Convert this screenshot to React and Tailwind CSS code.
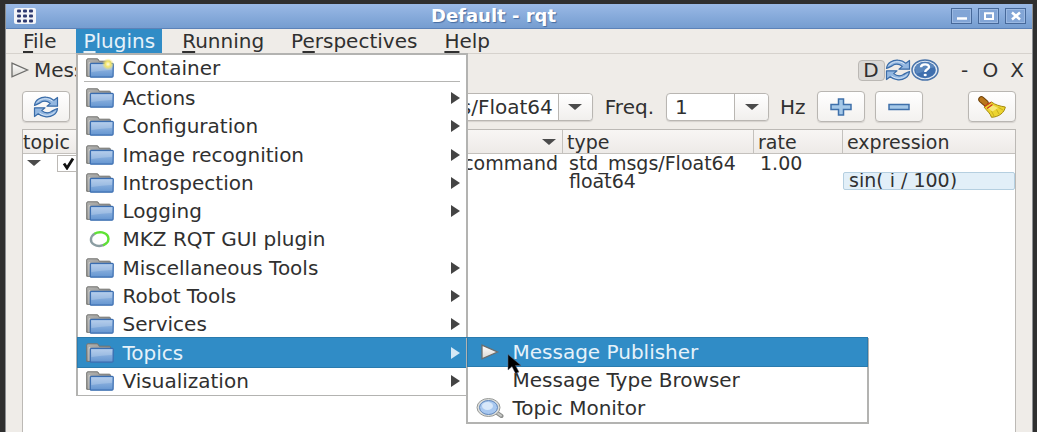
import React from "react";

function FolderIcon({ star }) {
  return (
    <svg viewBox="0 0 28 20" className="h-5 w-7 shrink-0" aria-hidden="true">
      <defs>
        <linearGradient id="folderFront" x1="0" y1="0" x2="0" y2="1">
          <stop offset="0" stopColor="#a5c3e8" />
          <stop offset="1" stopColor="#6495d0" />
        </linearGradient>
        <linearGradient id="folderBack" x1="0" y1="0" x2="1" y2="1">
          <stop offset="0" stopColor="#b5b5b3" />
          <stop offset="1" stopColor="#7c7c7a" />
        </linearGradient>
        <radialGradient id="folderStar">
          <stop offset="0" stopColor="#fffde0" />
          <stop offset="0.45" stopColor="#f3e56a" />
          <stop offset="1" stopColor="#f3e56a" stopOpacity="0" />
        </radialGradient>
      </defs>
      <path d="M.7 18.3V2Q.7.8 2 .8h9q1.2 0 1.6 1.2l.5 1.2h10.2q1.2 0 1.2 1.2v13.9z" fill="url(#folderBack)" stroke="#73736f" />
      <path d="M3 18V4.6h1" stroke="#d6d6d3" strokeWidth="0.8" fill="none" />
      <path d="M4.400 6.200q0-.9 1-.9h20.800q1.100 0 1.100 1l-.2 12q-.1.9-1 .9H5.200q-.9 0-.9-1z" fill="url(#folderFront)" stroke="#3a6db0" strokeWidth="1.2" />
      <path d="M5.300 6.700h20.800l-.2 5.200q-10 .4-20.500 2.200z" fill="#fff" opacity="0.2" />
      {star && <circle cx="22" cy="6.2" r="6" fill="url(#folderStar)" />}
    </svg>
  );
}

function RingIcon() {
  return (
    <svg viewBox="0 0 28 20" className="h-5 w-7 shrink-0" fill="none" strokeWidth="2.4" aria-hidden="true">
      <path d="M9 4.500C4 7.500 3.500 13 8 15.500C12 18 18 17 20.500 14" stroke="#8b9da2" />
      <path d="M8.500 4.800C13 2 20 3 22 7.500C23.500 11.500 21.500 14.500 17 16.300" stroke="#5fe334" />
    </svg>
  );
}

function PlayIcon({ className }) {
  return (
    <svg viewBox="0 0 20 16" className={className} aria-hidden="true">
      <defs>
        <linearGradient id="playFill" x1="0" y1="0" x2="0" y2="1">
          <stop offset="0" stopColor="#ffffff" />
          <stop offset="1" stopColor="#d9d7d2" />
        </linearGradient>
      </defs>
      <path d="M2 1.200L17.500 8L2 14.800Z" fill="url(#playFill)" stroke="#6d6d6b" strokeWidth="1.300" />
    </svg>
  );
}

function MagnifierIcon() {
  return (
    <svg viewBox="0 0 28 20" className="h-5 w-7 shrink-0" aria-hidden="true">
      <path d="M19 13.500L25.500 18" stroke="#8c8e8c" strokeWidth="4" strokeLinecap="round" />
      <path d="M19 13.500L25 17.600" stroke="#c6c8c6" strokeWidth="2" strokeLinecap="round" />
      <ellipse cx="12.500" cy="9.500" rx="11.500" ry="9" fill="#dcdedc" stroke="#989a98" />
      <ellipse cx="12.500" cy="9.500" rx="9" ry="7" fill="#a8c8f0" stroke="#5f86bb" />
      <ellipse cx="11.500" cy="8" rx="5.500" ry="4" fill="#e4f0fd" opacity="0.800" />
    </svg>
  );
}

function RefreshIcon({ className }) {
  return (
    <svg viewBox="0 0 26 22" className={className} aria-hidden="true">
      <g fill="#93b7e0" stroke="#3a6ca8" strokeWidth="1.200" strokeLinejoin="round">
        <path d="M1.500 9.500C2 3.500 8 .8 13 1.200C16.500 1.400 19 2.600 20.800 4.200L24.500 1.500V10.200H14L17.300 7.400C14 4.800 10 5 7.500 6.600C5.500 7.500 4.500 8.500 1.500 9.500Z" />
        <path d="M24.500 12.500C24 18.500 18 21.200 13 20.800C9.500 20.600 7 19.400 5.200 17.800L1.500 20.500V11.800H12L8.700 14.600C12 17.200 16 17 18.500 15.400C20.500 14.500 21.500 13.500 24.500 12.500Z" />
      </g>
      <path d="M4 6.500C6.500 2.800 14 1 19.500 5M22 15.500C19.500 19.200 12 21 6.500 17" fill="none" stroke="#d6e5f6" />
    </svg>
  );
}

function HelpIcon() {
  return (
    <svg viewBox="0 0 28 22" className="h-[22px] w-7" aria-hidden="true">
      <ellipse cx="14" cy="11" rx="13" ry="10" fill="#e3ebf4" stroke="#4a74aa" strokeWidth="1.500" />
      <ellipse cx="14" cy="11" rx="10.800" ry="8.200" fill="#3f6fae" />
      <path d="M4 9C7 2 20 1.500 24 8.500C18 8 12 14 5 14.500Z" fill="#7fa3d0" opacity="0.450" />
      <path d="M10 8.300C10.200 4.400 18.200 4.400 18 8.300C17.900 10.300 14.300 10.400 14.200 13" fill="none" stroke="#fff" strokeWidth="2.400" />
      <ellipse cx="14.200" cy="16" rx="1.600" ry="1.300" fill="#fff" />
    </svg>
  );
}

function BroomIcon() {
  return (
    <svg viewBox="0 0 28 22" className="h-[22px] w-7" aria-hidden="true">
      <path d="M3.500 3.500L7.500 7" stroke="#6f4209" strokeWidth="6.500" strokeLinecap="round" />
      <path d="M3.500 3.500L7.500 7" stroke="#b9761c" strokeWidth="4.500" strokeLinecap="round" />
      <path d="M6 11L13.500 6C17.500 9 21.500 10 27.300 11C26.500 16.500 21 21 13.500 21.300C12.500 17.500 9 15 6 11Z" fill="#ecd42f" stroke="#a58a0c" />
      <path d="M13.500 15L16 20M18.500 13.500L21 18M20.500 11.500L25 14" stroke="#c4a91c" strokeWidth="0.900" />
      <path d="M10 12L14 9L20 12L14.500 15.500Z" fill="#fdf3a0" opacity="0.650" />
      <path d="M6.500 10.500L13 6.300M9 12.500L14.500 8.500" stroke="#cf3a1f" strokeWidth="1.300" />
    </svg>
  );
}

function Down() {
  return (
    <svg viewBox="0 0 14 6" className="h-[6px] w-[14px]" aria-hidden="true">
      <path d="M0 0H14L7 6Z" fill="#4b4b4b" />
    </svg>
  );
}

function MenuRow({ icon, label, sub, active, children }) {
  return (
    <li className={"relative flex flex-1 " + (active ? "z-10" : "")}>
      <button
        className={
          "flex flex-1 items-center gap-2 pr-[6px] pl-2 text-left whitespace-nowrap " +
          (active ? "bg-[#308cc6] text-[#e6f2fa] outline outline-1 outline-[#2a7bae]" : "bg-white")
        }
      >
        {icon || <span className="w-7" />}
        <span className="flex-1">{label}</span>
        {sub && (
          <svg viewBox="0 0 10 12" className="h-3 w-[10px]" aria-hidden="true">
            <path d="M1 0V12L10 6Z" fill={active ? "#d4e8f5" : "#444"} />
          </svg>
        )}
      </button>
      {children}
    </li>
  );
}

const MENU = [
  "Actions", "Configuration", "Image recognition", "Introspection", "Logging",
  "MKZ RQT GUI plugin", "Miscellaneous Tools", "Robot Tools", "Services", "Topics", "Visualization",
];

function TopicsSubmenu() {
  return (
    <ul className="absolute top-0 left-full z-20 flex h-[86px] w-[403px] flex-col border-r-2 border-b-2 border-l-2 border-[#b3b3b1] bg-white">
      <MenuRow active icon={<span className="flex w-7 justify-center"><PlayIcon className="h-4 w-5" /></span>} label="Message Publisher">
        <svg viewBox="0 0 15 21" className="absolute top-4 left-[39px] h-[21px] w-[15px]" aria-hidden="true">
          <path d="M1 0.500V16L5 12.500L8.500 19.500L12 18L8.500 11.500H14Z" fill="#000" stroke="#667" strokeWidth="0.500" />
        </svg>
      </MenuRow>
      <MenuRow label="Message Type Browser" />
      <MenuRow icon={<MagnifierIcon />} label="Topic Monitor" />
    </ul>
  );
}

function PluginsMenu() {
  return (
    <div className="absolute top-full left-0 z-10 w-[392px] border-2 border-b border-[#b3b3b1] bg-white">
      <ul className="flex h-[26px]">
        <MenuRow icon={<FolderIcon star />} label="Container" />
      </ul>
      <hr className="mx-[6px] mb-[2px] border-[#b5b5b3]" />
      <ul className="flex h-[311px] flex-col">
        {MENU.map((name) => (
          <MenuRow
            key={name}
            label={name}
            active={name === "Topics"}
            sub={!name.startsWith("MKZ")}
            icon={name.startsWith("MKZ") ? <RingIcon /> : <FolderIcon />}
          >
            {name === "Topics" && <TopicsSubmenu />}
          </MenuRow>
        ))}
      </ul>
    </div>
  );
}

function WinButton({ label, children }) {
  return (
    <button aria-label={label} className="flex h-4 w-[21px] items-center justify-center border border-[#47699a] bg-[#82a5d6] shadow-[inset_0_0_0_1px_#9bb9e3]">
      <svg viewBox="0 0 12 10" className="h-[10px] w-3" fill="none" stroke="#fff" strokeWidth="2.500">{children}</svg>
    </button>
  );
}

const toolButton =
  "flex h-[31px] w-12 shrink-0 items-center justify-center rounded border border-[#b9b6b2] bg-linear-to-b from-white to-[#f3f1ef] shadow-[0_1px_1px_#d5d2ce]";

function Combo({ id, label, value, className, inputClass }) {
  return (
    <div className={"flex h-[28px] min-w-0 rounded border border-[#b9b6b2] bg-white shadow-[0_1px_1px_#d5d2ce] " + className}>
      <input id={id} aria-label={label} defaultValue={value} className={"min-w-0 flex-1 bg-transparent outline-none " + inputClass} />
      <button aria-label={"Choose " + label} className="flex w-[34px] items-center justify-center rounded-r border-l border-[#b9b6b2] bg-linear-to-b from-white to-[#f1efed]">
        <Down />
      </button>
    </div>
  );
}

const headCell = "h-6 border-r border-b border-[#c4c1bd] px-1 text-left font-normal last:border-r-0";

export default function App() {
  return (
    <div className="h-screen overflow-hidden bg-[#2f2f2f] pt-1 pr-1 pl-[5px] font-['DejaVu_Sans',sans-serif] text-[20px] leading-5 text-[#303030]">
      <div className="flex h-full flex-col border-r border-l border-[#8d8f92] bg-[#efece8]">
        <header className="flex h-[25px] shrink-0 items-center border-b border-[#5c82b8] bg-linear-to-b from-[#9ab9e6] to-[#759dd0] pr-[6px] pl-2">
          <svg viewBox="0 0 22 16" className="h-4 w-[22px]" aria-hidden="true">
            <rect width="22" height="16" rx="2" fill="#f4f5f8" />
            <g fill="#2e3a70">
              {[3, 9, 15].map((x) => [1.5, 6.5, 11.5].map((y) => <rect key={x + "-" + y} x={x} y={y} width="4" height="3" rx="1" />))}
            </g>
          </svg>
          <h1 className="flex-1 text-center text-[18px] leading-5 font-bold text-white [text-shadow:1px_1px_1px_#466ca0]">Default - rqt</h1>
          <div className="flex gap-[6px]">
            <WinButton label="Minimize"><path d="M1 7.500H11" /></WinButton>
            <WinButton label="Maximize"><path d="M2 2.200H10V8H2Z" strokeWidth="2" /></WinButton>
            <WinButton label="Close"><path d="M2 1.500L10 8.500M10 1.500L2 8.500" /></WinButton>
          </div>
        </header>

        <nav className="flex h-[25px] shrink-0 items-stretch gap-[13px] border-b border-[#d6d2cd] pl-[10px] underline-offset-[3px]">
          <button className="px-[7px]"><u>F</u>ile</button>
          <div className="relative flex">
            <button className="bg-[#308cc6] px-[7px] text-[#e6f2fa]"><u>P</u>lugins</button>
            <PluginsMenu />
          </div>
          <button className="px-[7px]"><u>R</u>unning</button>
          <button className="px-[7px]">P<u>e</u>rspectives</button>
          <button className="px-[7px]"><u>H</u>elp</button>
        </nav>

        <div className="flex h-8 shrink-0 items-center pr-2 pl-1">
          <PlayIcon className="h-4 w-5" />
          <h2 className="flex-1 pl-1">Message Publisher</h2>
          <button className="h-[21px] w-[27px] rounded border border-[#bbb8b4] bg-[#dcdad7] leading-[19px]">D</button>
          <button aria-label="Reload"><RefreshIcon className="h-[22px] w-[26px]" /></button>
          <button aria-label="Help"><HelpIcon /></button>
          <div className="flex gap-3 pl-5">
            <button className="w-3">-</button>
            <button>O</button>
            <button>X</button>
          </div>
        </div>

        <div className="flex h-[43px] shrink-0 items-center px-4 pb-[2px]">
          <button aria-label="Refresh topics" className={toolButton}><RefreshIcon className="h-[22px] w-[26px]" /></button>
          <Combo label="type" value="std_msgs/Float64" className="ml-3 flex-1" inputClass="pr-[5px] text-right" />
          <label htmlFor="freq" className="px-3">Freq.</label>
          <Combo id="freq" label="frequency" value="1" className="w-[103px]" inputClass="pl-2" />
          <span className="w-12 pl-[11px]">Hz</span>
          <button aria-label="Add" className={toolButton}>
            <svg viewBox="0 0 22 18" className="h-[18px] w-[22px]"><path d="M8.500 1H13.500V6.500H21V11.500H13.500V17H8.500V11.500H1V6.500H8.500Z" fill="#a5c8e8" stroke="#3f70aa" strokeWidth="1.500" /></svg>
          </button>
          <button aria-label="Remove" className={toolButton + " ml-[10px]"}>
            <svg viewBox="0 0 22 18" className="h-[18px] w-[22px]"><path d="M1 6.500H21V11.500H1Z" fill="#a5c8e8" stroke="#3f70aa" strokeWidth="1.500" /></svg>
          </button>
          <button aria-label="Clear" className={toolButton + " ml-[45px]"}><BroomIcon /></button>
        </div>

        <main className="mx-4 min-h-0 flex-1 border border-b-0 border-[#bcb9b5] bg-white text-[19px] leading-[18px]">
          <table className="w-full table-fixed border-separate border-spacing-0">
            <colgroup>
              <col />
              <col className="w-[191px]" />
              <col className="w-[89px]" />
              <col className="w-[172px]" />
            </colgroup>
            <thead>
              <tr className="bg-linear-to-b from-[#f8f6f4] to-[#edeae7]">
                <th className={headCell + " pl-0"}>
                  <div className="flex items-center justify-between pr-[2px]">topic<Down /></div>
                </th>
                <th className={headCell}>type</th>
                <th className={headCell}>rate</th>
                <th className={headCell}>expression</th>
              </tr>
            </thead>
            <tbody>
              <tr>
                <td className="p-0">
                  <label className="flex h-[18px] items-center pr-[5px] pl-1">
                    <Down />
                    <span className="relative ml-4 flex">
                      <input type="checkbox" defaultChecked className="h-[17px] w-[22px] appearance-none border border-[#bcb9b5] bg-white" />
                      <svg viewBox="0 0 14 13" className="pointer-events-none absolute top-[2px] left-[5px] h-[13px] w-[14px]">
                        <path d="M2 6.500L5 11L11 1.500" fill="none" stroke="#111" strokeWidth="2.800" />
                      </svg>
                    </span>
                    <span className="flex-1 text-right">command</span>
                  </label>
                </td>
                <td className="py-0 pl-[6px]">std_msgs/Float64</td>
                <td className="py-0 pl-[6px]">1.00</td>
                <td className="p-0" />
              </tr>
              <tr>
                <td className="p-0" />
                <td className="py-0 pl-[6px]">float64</td>
                <td className="p-0" />
                <td className="p-0">
                  <input aria-label="expression" defaultValue="sin( i / 100)" className="block h-[18px] w-full rounded-xs border border-[#b5cfe0] bg-[#e2eff8] pb-[2px] pl-[5px] leading-4 outline-none" />
                </td>
              </tr>
            </tbody>
          </table>
        </main>
      </div>
    </div>
  );
}
